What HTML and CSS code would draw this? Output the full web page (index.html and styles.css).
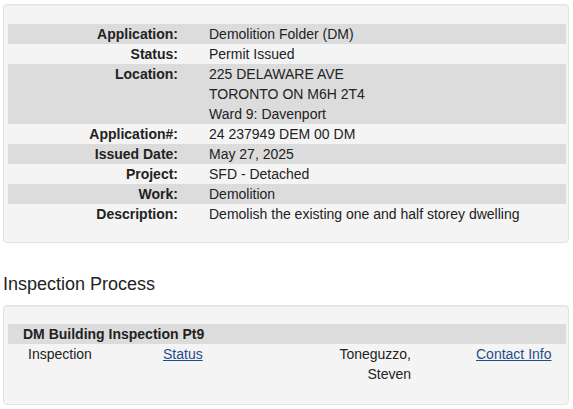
FILE: index.html
```html
<!DOCTYPE html>
<html>
<head>
<meta charset="utf-8">
<link rel="stylesheet" href="styles.css">
</head>
<body>
<div class="page">
  <div class="well details">
    <div class="row shade"><div class="lbl">Application:</div><div class="val">Demolition Folder (DM)</div></div>
    <div class="row"><div class="lbl">Status:</div><div class="val">Permit Issued</div></div>
    <div class="row shade"><div class="lbl">Location:</div><div class="val">225 DELAWARE AVE<br>TORONTO ON M6H 2T4<br>Ward 9: Davenport</div></div>
    <div class="row"><div class="lbl">Application#:</div><div class="val">24 237949 DEM 00 DM</div></div>
    <div class="row shade"><div class="lbl">Issued Date:</div><div class="val">May 27, 2025</div></div>
    <div class="row"><div class="lbl">Project:</div><div class="val">SFD - Detached</div></div>
    <div class="row shade"><div class="lbl">Work:</div><div class="val">Demolition</div></div>
    <div class="row"><div class="lbl">Description:</div><div class="val">Demolish the existing one and half storey dwelling</div></div>
  </div>
  <h2 class="heading">Inspection Process</h2>
  <div class="well insp">
    <div class="insp-head">DM Building Inspection Pt9</div>
    <div class="insp-row">
      <div class="c1">Inspection</div>
      <div class="c2"><a href="#">Status</a></div>
      <div class="c3">Toneguzzo, Steven</div>
      <div class="c4"><a href="#">Contact Info</a></div>
    </div>
  </div>
</div>
</body>
</html>
```
FILE: styles.css
```css
html, body {
  margin: 0;
  padding: 0;
  background: #fff;
}
body {
  font-family: "Liberation Sans", Arial, sans-serif;
  font-size: 14px;
  line-height: 20px;
  color: #222;
}
.page {
  padding: 4px 4px 0 3px;
  width: 566px;
}
.well {
  background: #f4f4f4;
  border: 1px solid #e3e3e3;
  border-radius: 4px;
  box-shadow: inset 0 1px 1px rgba(0,0,0,0.04);
}
.details {
  padding: 19px 2px 18px 4px;
}
.row {
  display: grid;
  grid-template-columns: 185px 1fr;
}
.shade {
  background: #dcdcdc;
}
.lbl {
  font-weight: bold;
  text-align: right;
  padding-right: 15px;
}
.val {
  padding-left: 16px;
}
.heading {
  font-size: 18px;
  font-weight: normal;
  line-height: 22px;
  margin: 0;
  padding: 30px 0 10px 0;
}
.insp {
  padding: 18px 2px 20px 4px;
}
.insp-head {
  background: #dcdcdc;
  font-weight: bold;
  padding-left: 15px;
}
.insp-row {
  display: grid;
  grid-template-columns: 155px 147px 101px 1fr;
}
.c1 { padding-left: 20px; }
.c3 { text-align: right; }
.c4 { padding-left: 65px; }
a {
  color: #1f4d8b;
  text-decoration: underline;
}
```
